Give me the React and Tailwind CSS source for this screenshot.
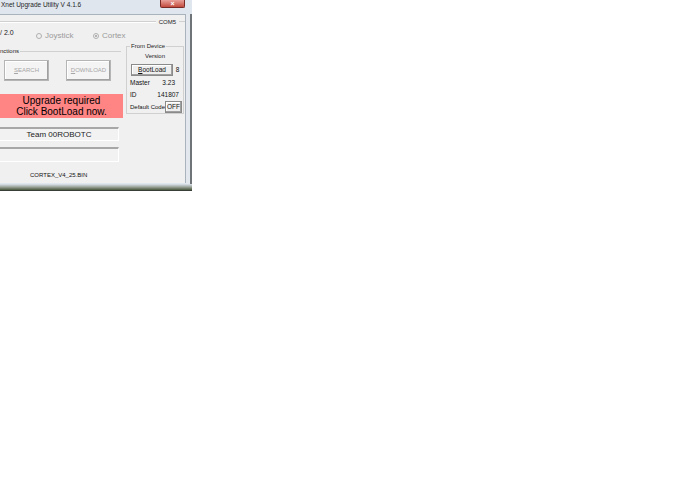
export default function App() {
  const font = { fontFamily: '"Liberation Sans", Arial, sans-serif' }
  return (
    <div className="w-[690px] h-[500px] bg-white" style={font}>
      <div className="relative w-[192px] h-[191px] bg-[#dfe6ee] flex flex-col">
        {/* title bar */}
        <div className="h-[14px] flex items-start shrink-0">
          <span className="text-[6.5px] leading-[9px] text-[#1e1e1e] pl-[1px] whitespace-nowrap">
            Xnet Upgrade Utility V 4.1.6
          </span>
          <div className="absolute left-[160px] top-0 w-[25px] h-[8px] bg-gradient-to-b from-[#e8a09a] to-[#c24a3e] border border-t-0 border-[#7a2a24] rounded-b-[2px] flex items-center justify-center">
            <span className="text-white text-[7px] leading-none font-bold">×</span>
          </div>
        </div>
        <div className="flex flex-1">
          {/* client area */}
          <div className="w-[186px] h-[169px] bg-[#f0f0f0] border-t border-r border-[#a9b3bd] flex flex-col">
            <div className="h-[13px] flex items-center">
              <div className="flex-1 border-t border-[#d0d0d0] border-b-white border-b" />
              <span className="text-[6px] leading-none px-[3px] text-[#222]">COM5</span>
              <div className="w-[6px] border-t border-[#d0d0d0]" />
            </div>
            <div className="relative h-[18px]">
              <span className="absolute left-0 top-[1px] text-[7px] leading-none text-[#222]">/ 2.0</span>
              <div className="absolute left-[36px] top-[4px] flex items-center gap-[2px] text-[8px] leading-none text-[#9a9a9a]">
                <span className="w-[6px] h-[6px] rounded-full border border-[#b0b0b0]" />
                <span className="ml-[1px]">Joystick</span>
              </div>
              <div className="absolute left-[93px] top-[4px] flex items-center gap-[2px] text-[8px] leading-none text-[#9a9a9a]">
                <span className="w-[6px] h-[6px] rounded-full border border-[#b0b0b0] flex items-center justify-center">
                  <span className="w-[2px] h-[2px] rounded-full bg-[#a0a0a0]" />
                </span>
                <span className="ml-[1px]">Cortex</span>
              </div>
            </div>
            <div className="flex">
              {/* left column */}
              <div className="w-[123px] flex flex-col">
                <div className="relative mt-[5px] h-[37px] border-t border-[#d0d0d0] mr-[2px]">
                  <span className="absolute left-0 -top-[4px] bg-[#f0f0f0] pr-[1px] text-[6px] leading-none text-[#222]">nctions</span>
                  <div className="flex mt-[8px] gap-[17px] pl-[4px]">
                    <div className="w-[45px] h-[21px] border border-[#b5b5b5] bg-[#f4f4f4] shadow-[inset_-1px_-1px_0_#a0a0a0,inset_1px_1px_0_#fff] flex items-center justify-center text-[6px] text-[#a6a6a6]">
                      <span><span className="underline">S</span>EARCH</span>
                    </div>
                    <div className="w-[45px] h-[21px] border border-[#b5b5b5] bg-[#f4f4f4] shadow-[inset_-1px_-1px_0_#a0a0a0,inset_1px_1px_0_#fff] flex items-center justify-center text-[6px] text-[#a6a6a6]">
                      <span><span className="underline">D</span>OWNLOAD</span>
                    </div>
                  </div>
                </div>
                <div className="mt-[6px] h-[24px] bg-[#ff8585] flex flex-col items-center justify-center text-[10px] leading-[11px] text-black">
                  <span>Upgrade required</span>
                  <span>Click BootLoad now.</span>
                </div>
                <div className="mt-[9px] w-[119px] h-[14px] border-t-2 border-[#a7a7a7] border-r border-r-white border-b border-b-white bg-[#f2f2f2] flex items-center justify-center text-[8px] leading-none text-[#222]">
                  Team 00ROBOTC
                </div>
                <div className="mt-[6px] w-[119px] h-[15px] border-t-2 border-[#a7a7a7] border-r border-r-white border-b border-b-white bg-[#f2f2f2]" />
                <div className="mt-[10px] pl-[30px] text-[6px] leading-none text-[#111]">CORTEX_V4_25.BIN</div>
              </div>
              {/* right column */}
              <div className="ml-[3px] w-[58px] h-[68px] border border-[#d0d0d0] relative flex flex-col">
                <span className="absolute left-[3px] -top-[4px] bg-[#f0f0f0] px-[1px] text-[6px] leading-none text-[#222] whitespace-nowrap">From Device</span>
                <span className="mt-[6px] text-center text-[6px] leading-none text-[#222]">Version</span>
                <div className="flex items-center mt-[5px] pl-[4px]">
                  <div className="w-[42px] h-[12px] border border-[#8a8a8a] bg-[#eeeeee] shadow-[inset_-1px_-1px_0_#a0a0a0,inset_1px_1px_0_#fff] flex items-center justify-center text-[6.5px] leading-none text-[#111]">
                    <span><span className="underline">B</span>ootLoad</span>
                  </div>
                  <span className="ml-[-1px] flex-1 text-center text-[6.5px] leading-none text-[#111]">8</span>
                </div>
                <div className="flex justify-between items-center mt-[4px] px-[3px] text-[6.5px] leading-none text-[#111]">
                  <span>Master</span>
                  <span className="pr-[5px]">3.23</span>
                </div>
                <div className="flex justify-between items-center mt-[5px] px-[3px] text-[6.5px] leading-none text-[#111]">
                  <span>ID</span>
                  <span className="pr-[1px]">141807</span>
                </div>
                <div className="flex justify-between items-center mt-[3px] pl-[3px] pr-[1px] text-[6px] leading-none text-[#111] whitespace-nowrap">
                  <span>Default Code</span>
                  <div className="w-[18px] h-[12px] border border-[#8a8a8a] bg-[#eeeeee] shadow-[inset_-1px_-1px_0_#a0a0a0,inset_1px_1px_0_#fff] flex items-center justify-center text-[6.5px]">
                    OFF
                  </div>
                </div>
              </div>
            </div>
          </div>
          {/* right frame */}
          <div className="w-[6px] h-[172px] bg-[#e2e8ee] border-r-2 border-[#6f7479]" />
        </div>
        <div className="absolute left-0 bottom-0 w-[192px] h-[7px] bg-gradient-to-b from-[#dfe6ee] via-[#9aa39a] to-[#4b5a3e] border-b border-[#3a3f36]" />
      </div>
    </div>
  )
}
